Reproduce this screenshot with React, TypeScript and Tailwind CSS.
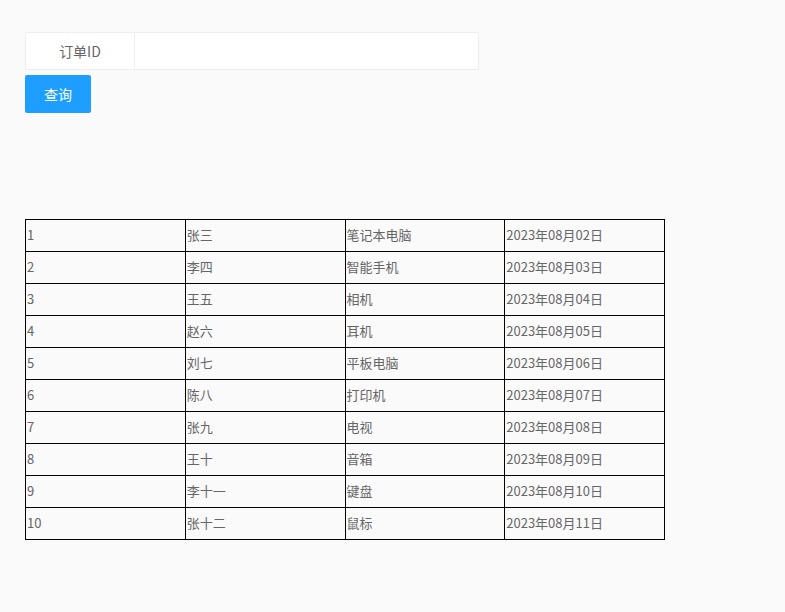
const rows = [
  ["1", "张三", "笔记本电脑", "2023年08月02日"],
  ["2", "李四", "智能手机", "2023年08月03日"],
  ["3", "王五", "相机", "2023年08月04日"],
  ["4", "赵六", "耳机", "2023年08月05日"],
  ["5", "刘七", "平板电脑", "2023年08月06日"],
  ["6", "陈八", "打印机", "2023年08月07日"],
  ["7", "张九", "电视", "2023年08月08日"],
  ["8", "王十", "音箱", "2023年08月09日"],
  ["9", "李十一", "键盘", "2023年08月10日"],
  ["10", "张十二", "鼠标", "2023年08月11日"],
];

export default function App() {
  return (
    <div className="min-h-[612px] bg-[#fafafa] px-[25px] pt-[32px] font-['Noto_Sans_CJK_SC',sans-serif]">
      {/* Search form */}
      <div className="flex h-[38px] w-[454px] rounded-[2px] border border-[#eee] bg-white">
        <label className="flex w-[109px] items-center justify-center border-r border-[#eee] text-[14px] text-[#666]">
          订单ID
        </label>
        <input className="flex-1 px-2 text-[14px] outline-none" />
      </div>
      <button className="mt-[5px] h-[38px] w-[66px] rounded-[2px] bg-[#1e9fff] text-[14px] text-white">
        查询
      </button>

      {/* Result table */}
      <table className="mt-[106px] w-[640px] table-fixed border-collapse border border-black text-[13px] text-[#666]">
        <tbody>
          {rows.map((r) => (
            <tr key={r[0]} className="h-[32px]">
              {r.map((c, i) => (
                <td key={i} className="border border-black px-[1px] pt-0 pb-[2px] text-left leading-none">
                  {c}
                </td>
              ))}
            </tr>
          ))}
        </tbody>
      </table>
    </div>
  );
}
